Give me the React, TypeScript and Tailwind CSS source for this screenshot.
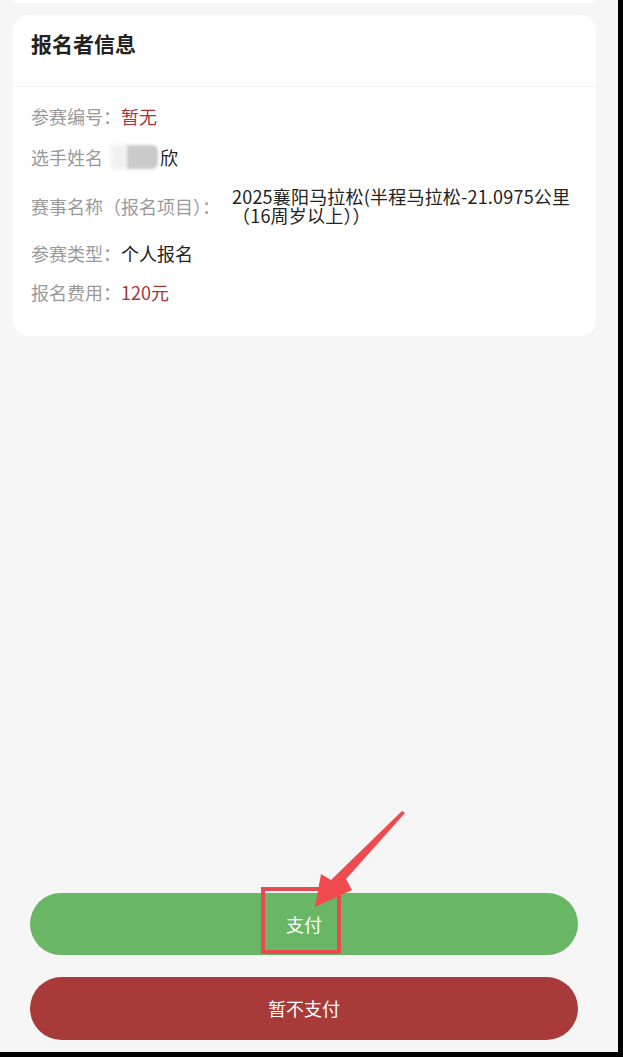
import React from "react";

const FONT = { fontFamily: '"Noto Sans CJK SC", "Noto Sans", sans-serif' };

function Row({ label, children }: { label: string; children: React.ReactNode }) {
  return (
    <div className="flex items-center text-[18px] leading-[20px]">
      <span className="text-[#9a9a9a] whitespace-nowrap">{label}</span>
      {children}
    </div>
  );
}

export default function App() {
  return (
    <div className="w-[623px] h-[1057px] bg-black overflow-hidden" style={FONT}>
      <div className="flex h-[1052px]">
        <div className="relative w-[618px] h-full bg-[#f6f6f6] flex flex-col">
          {/* previous card bottom */}
          <div className="mx-[13px] w-[583px] h-[3px] bg-white rounded-b-[6px]" />

          {/* card */}
          <div className="mt-[12px] ml-[13px] w-[583px] bg-white rounded-[16px]">
            <div className="h-[72px] pl-[18px] pt-[16px] border-b border-[#f1f1f1]">
              <div className="text-[21px] leading-[24px] font-bold text-[#222]">报名者信息</div>
            </div>
            <div className="pl-[18px] pt-[19px] pb-[34px] flex flex-col gap-[19px]">
              <Row label="参赛编号：">
                <span className="text-[#a83636]">暂无</span>
              </Row>
              <Row label="选手姓名">
                <span className="relative w-[57px] h-[24px] inline-block">
                  <span className="absolute left-[8px] top-[0px] w-[16px] h-[24px] bg-[#f0f0f0] blur-[2px]" />
                  <span className="absolute left-[24px] top-[0px] w-[31px] h-[24px] bg-[#cacaca] blur-[1.5px] rounded-r-[6px]" />
                </span>
                <span className="text-[#222]">欣</span>
              </Row>
              <div className="flex items-center text-[18px]">
                <span className="text-[#9a9a9a] whitespace-nowrap leading-[20px]">赛事名称（报名项目）：</span>
                <div className="ml-[12px] -my-[1px] text-[#222] leading-[19px] text-[18px] tracking-[0.2px] whitespace-nowrap">
                  2025襄阳马拉松(半程马拉松-21.0975公里
                  <br />
                  （16周岁以上））
                </div>
              </div>
              <Row label="参赛类型：">
                <span className="text-[#222]">个人报名</span>
              </Row>
              <Row label="报名费用：">
                <span className="text-[#a83636]">120元</span>
              </Row>
            </div>
          </div>

          {/* buttons */}
          <div className="mt-auto ml-[30px] w-[548px] pb-[12px] flex flex-col gap-[22px]">
            <button className="h-[62px] w-full rounded-full bg-[#69b665] text-white text-[18px]">支付</button>
            <button className="h-[63px] w-full rounded-full bg-[#a93a3a] text-white text-[18px]">暂不支付</button>
          </div>

          {/* annotation overlay */}
          <svg className="absolute left-0 top-0 pointer-events-none" width="618" height="1052" viewBox="0 0 618 1052">
            <rect x="263" y="889" width="76" height="63" fill="none" stroke="#ea4a4d" strokeWidth="4" />
            <polygon
              points="402,811 405,813 346,879 352,890 315,907 321,874 331,880"
              fill="#ef4a4d"
            />
          </svg>
        </div>
      </div>
    </div>
  );
}
